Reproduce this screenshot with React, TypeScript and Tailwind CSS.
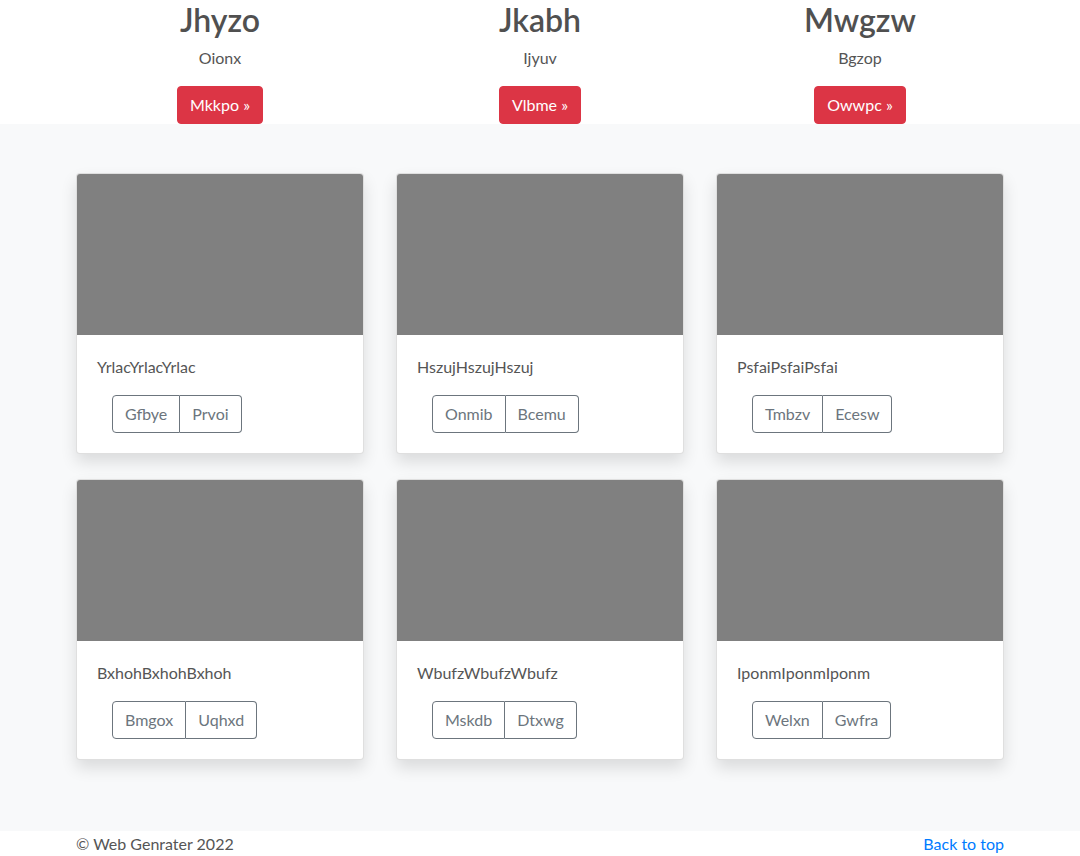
const columns = [
  { title: 'Jhyzo', sub: 'Oionx', cta: 'Mkkpo' },
  { title: 'Jkabh', sub: 'Ijyuv', cta: 'Vlbme' },
  { title: 'Mwgzw', sub: 'Bgzop', cta: 'Owwpc' },
]

const cards = [
  { text: 'YrlacYrlacYrlac', a: 'Gfbye', b: 'Prvoi' },
  { text: 'HszujHszujHszuj', a: 'Onmib', b: 'Bcemu' },
  { text: 'PsfaiPsfaiPsfai', a: 'Tmbzv', b: 'Ecesw' },
  { text: 'BxhohBxhohBxhoh', a: 'Bmgox', b: 'Uqhxd' },
  { text: 'WbufzWbufzWbufz', a: 'Mskdb', b: 'Dtxwg' },
  { text: 'IponmIponmIponm', a: 'Welxn', b: 'Gwfra' },
]

export default function App() {
  return (
    <div className="min-h-[856px] bg-white text-[#555] font-['Lato',sans-serif] text-base leading-6">
      {/* Marketing columns */}
      <section className="bg-white">
        <div className="mx-auto w-[960px] grid grid-cols-3">
          {columns.map((c) => (
            <div key={c.title} className="flex flex-col items-center text-center">
              <h2 className="text-[32px] leading-[38px] font-semibold mt-px mb-2 text-[#505050]">{c.title}</h2>
              <p className="mb-4 -mt-px">{c.sub}</p>
              <a className="inline-block h-[38px] px-3 py-[6px] rounded bg-[#dc3545] border border-[#dc3545] text-white leading-6">
                {c.cta} »
              </a>
            </div>
          ))}
        </div>
      </section>

      {/* Album */}
      <main className="bg-[#f8f9fa] pt-[49px] pb-[71px]">
        <div className="mx-auto w-[928px] grid grid-cols-3 gap-x-8 gap-y-[25px]">
          {cards.map((c) => (
            <div
              key={c.text}
              className="bg-white border border-black/[0.125] rounded overflow-hidden shadow-[0_8px_16px_rgba(0,0,0,0.12)]"
            >
              <div className="h-[161px] bg-[#808080]" />
              <div className="p-5">
                <p className="mb-4">{c.text}</p>
                <div className="ml-[15px] inline-flex text-[#6c757d]">
                  <button className="h-[38px] px-3 border border-[#6c757d] rounded-l leading-6">{c.a}</button>
                  <button className="h-[38px] px-3 border border-l-0 border-[#6c757d] rounded-r leading-6">{c.b}</button>
                </div>
              </div>
            </div>
          ))}
        </div>
      </main>

      {/* Footer */}
      <footer className="bg-white pt-px">
        <div className="mx-auto w-[928px] flex justify-between">
          <p>© Web Genrater 2022</p>
          <a className="text-[#007bff]">Back to top</a>
        </div>
      </footer>
    </div>
  )
}
